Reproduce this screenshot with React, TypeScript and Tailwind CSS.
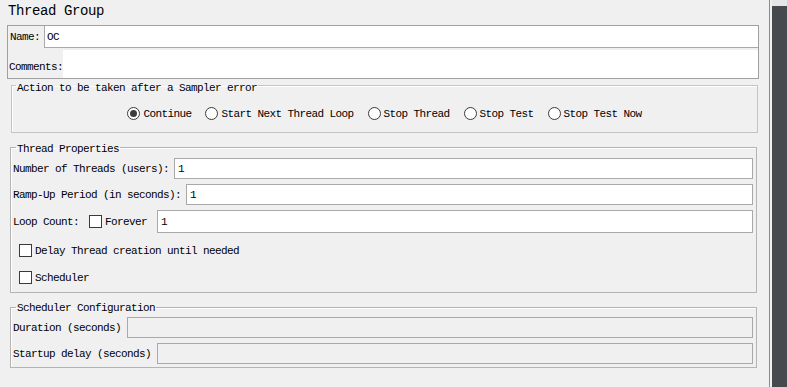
import clsx from 'clsx';

const mono = "font-['Liberation_Mono','DejaVu_Sans_Mono',monospace] text-[11px] leading-[12px] tracking-[-0.6px] text-black";

function Field({ value = '', disabled = false, tall = false }: { value?: string; disabled?: boolean; tall?: boolean }) {
  return (
    <div
      className={clsx(
        'flex flex-1 items-center border border-[#a9a9a9] pl-[3px]',
        tall ? 'h-[23px]' : 'h-[21px]',
        disabled ? 'bg-[#f0f0f0]' : 'bg-white',
      )}
    >
      {value}
    </div>
  );
}

function Radio({ label, checked = false }: { label: string; checked?: boolean }) {
  return (
    <div className="flex items-center gap-[3px]">
      <span className="flex h-[13px] w-[13px] items-center justify-center rounded-full border border-[#3a3a3a] bg-white">
        {checked && <span className="h-[7px] w-[7px] rounded-full bg-[#3c3c3c]" />}
      </span>
      <span>{label}</span>
    </div>
  );
}

function Check({ label }: { label: string }) {
  return (
    <div className="flex h-[13px] items-center gap-[3px]">
      <span className="h-[13px] w-[13px] border border-[#3a3a3a] bg-white" />
      <span>{label}</span>
    </div>
  );
}

function Legend({ text, shift, indent }: { text: string; shift: string; indent: string }) {
  return (
    <legend className={clsx('px-px', indent)}>
      <span className={clsx('relative', shift)}>{text}</span>
    </legend>
  );
}

export default function App() {
  return (
    <div className={clsx('flex h-[387px] w-[787px] overflow-hidden bg-[#f0f0f0]', mono)}>
      <div className="flex w-[769px] flex-col">
        {/* title */}
        <div className="h-[25px] pl-[8px] pt-[4px] text-[14px] leading-[14px] tracking-[-0.4px]">Thread Group</div>

        {/* name / comments */}
        <div className="ml-[7px] mr-[10px] border border-[#a0a0a0]">
          <div className="flex h-[22px]">
            <div className="flex w-[36px] items-center pl-[2px]">Name:</div>
            <div className="flex flex-1 items-center border-b border-l border-[#a9a9a9] bg-white pl-[2px]">OC</div>
          </div>
          <div className="flex h-[30px]">
            <div className="mb-[5px] w-[55px] self-end pl-[1px]">Comments:</div>
            <div className="mt-[2px] flex-1 bg-white" />
          </div>
        </div>

        {/* sampler error action */}
        <fieldset className="ml-[11px] mr-[11px] border border-[#c4c4c4] pb-[12px] shadow-[inset_1px_1px_0_#ffffff]">
          <Legend text="Action to be taken after a Sampler error" shift="top-[3px]" indent="ml-[4px]" />
          <div className="mt-[16px] flex justify-center gap-[14px]">
            <Radio label="Continue" checked />
            <Radio label="Start Next Thread Loop" />
            <Radio label="Stop Thread" />
            <Radio label="Stop Test" />
            <Radio label="Stop Test Now" />
          </div>
        </fieldset>

        {/* thread properties */}
        <fieldset className="ml-[10px] mr-[12px] mt-[8px] border border-[#b4b4b4] pb-[8px] pl-[2px] pr-[3px] shadow-[inset_1px_1px_0_#ffffff]">
          <Legend text="Thread Properties" shift="top-[2px]" indent="ml-[3px]" />
          <div className="mt-[5px] flex items-center gap-[5px]">
            <span>Number of Threads (users):</span>
            <Field value="1" />
          </div>
          <div className="mt-[5px] flex items-center gap-[5px]">
            <span>Ramp-Up Period (in seconds):</span>
            <Field value="1" />
          </div>
          <div className="mt-[5px] flex items-center">
            <span>Loop Count:</span>
            <div className="ml-[10px] mr-[10px]">
              <Check label="Forever" />
            </div>
            <Field value="1" tall />
          </div>
          <div className="ml-[6px] mt-[11px]">
            <Check label="Delay Thread creation until needed" />
          </div>
          <div className="ml-[6px] mt-[14px]">
            <Check label="Scheduler" />
          </div>
        </fieldset>

        {/* scheduler configuration */}
        <fieldset className="ml-[10px] mr-[12px] mt-[8px] border border-[#b4b4b4] pb-[3px] pl-[2px] pr-[3px] shadow-[inset_1px_1px_0_#ffffff]">
          <Legend text="Scheduler Configuration" shift="top-[1px]" indent="ml-[3px]" />
          <div className="mt-[4px] flex items-center gap-[6px]">
            <span>Duration (seconds)</span>
            <Field disabled />
          </div>
          <div className="mt-[5px] flex items-center gap-[6px]">
            <span>Startup delay (seconds)</span>
            <Field disabled />
          </div>
        </fieldset>
      </div>

      {/* right edge of the window */}
      <div className="w-px bg-[#8a8a8a]" />
      <div className="w-[2px] bg-[#f0f0f0]" />
      <div className="flex w-[15px] flex-col bg-[#464a4e]">
        <div className="h-[6px] bg-[#e6e6e6]" />
      </div>
    </div>
  );
}
